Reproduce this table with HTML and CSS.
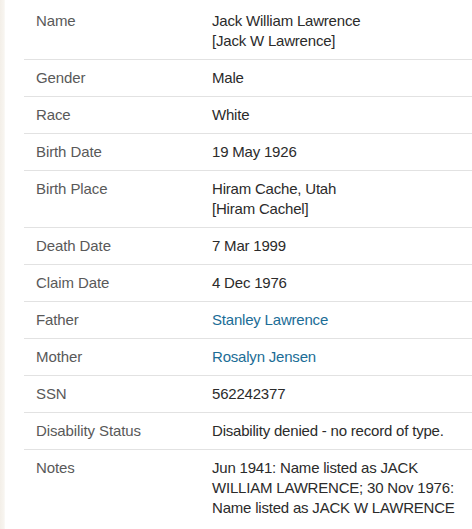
FILE: index.html
```html
<!DOCTYPE html>
<html>
<head>
<meta charset="utf-8">
<link rel="stylesheet" href="styles.css">
</head>
<body>
<div class="page">
  <div class="stripe"></div>
  <dl class="facts">
    <div class="row"><dt>Name</dt><dd>Jack William Lawrence<br>[Jack W Lawrence]</dd></div>
    <div class="row"><dt>Gender</dt><dd>Male</dd></div>
    <div class="row"><dt>Race</dt><dd>White</dd></div>
    <div class="row"><dt>Birth Date</dt><dd>19 May 1926</dd></div>
    <div class="row"><dt>Birth Place</dt><dd>Hiram Cache, Utah<br>[Hiram Cachel]</dd></div>
    <div class="row"><dt>Death Date</dt><dd>7 Mar 1999</dd></div>
    <div class="row"><dt>Claim Date</dt><dd>4 Dec 1976</dd></div>
    <div class="row"><dt>Father</dt><dd><a href="#">Stanley Lawrence</a></dd></div>
    <div class="row"><dt>Mother</dt><dd><a href="#">Rosalyn Jensen</a></dd></div>
    <div class="row"><dt>SSN</dt><dd>562242377</dd></div>
    <div class="row"><dt>Disability Status</dt><dd>Disability denied - no record of type.</dd></div>
    <div class="row last"><dt>Notes</dt><dd>Jun 1941: Name listed as JACK WILLIAM LAWRENCE; 30 Nov 1976: Name listed as JACK W LAWRENCE</dd></div>
  </dl>
</div>
</body>
</html>
```
FILE: styles.css
```css
html, body {
  margin: 0;
  padding: 0;
  background: #ffffff;
}
body {
  font-family: "Liberation Sans", Arial, sans-serif;
  font-size: 15px;
  line-height: 20px;
}
.page {
  display: flex;
  min-height: 529px;
}
.stripe {
  width: 5px;
  flex: none;
  background: linear-gradient(to right, #f3efe8, #f7f4ef 70%, #fbfaf7);
}
.facts {
  flex: 1;
  margin: 3px 0 0 19px;
}
.row {
  display: grid;
  grid-template-columns: 176px 1fr;
  padding: 8px 0 8px 12px;
  border-bottom: 1px solid #e2e2e2;
}
.row.last {
  border-bottom: none;
}
dt {
  color: #595959;
  letter-spacing: -0.1px;
}
dd {
  margin: 0;
  color: #2b2b2b;
  letter-spacing: -0.2px;
}
a {
  color: #1b6d96;
  text-decoration: none;
}
```
